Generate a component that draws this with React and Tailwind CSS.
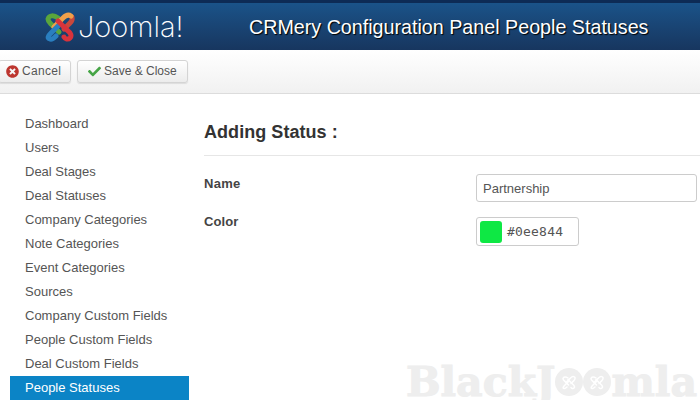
import React from "react";
import { FaTimesCircle, FaCheck } from "react-icons/fa";

const items = ["Dashboard","Users","Deal Stages","Deal Statuses","Company Categories","Note Categories","Event Categories","Sources","Company Custom Fields","People Custom Fields","Deal Custom Fields"];

function Mark({ size = 32, c = ["#5aa63c","#c9483c","#f0a04a","#2a7fc0","#d8333c"], w = 5 }) {
  return (
    <svg width={size} height={size * 30 / 32} viewBox="0 0 32 30" fill="none" strokeWidth={w} strokeLinecap="round" strokeLinejoin="round">
      <path d="M14 6C10 3 5 3 4 7C4 10 6 11 8 13L15 20" stroke={c[0]} />
      <path d="M28 5C29 9 27 10 25 12L20 17" stroke={c[1]} />
      <path d="M27 4C24 2 21 4 19 6L10 15" stroke={c[2]} />
      <path d="M15 13L7 21C4 24 3 26 6 27C8 28 10 26 12 24" stroke={c[3]} />
      <path d="M14 9L23 18C27 21 28 24 26 26C24 28 21 27 20 25" stroke={c[4]} />
    </svg>
  );
}

const grey = ["#fff","#fff","#fff","#fff","#fff"];

function Btn({ icon, label, className, textClass }) {
  return (
    <div className={"flex h-[23px] items-center rounded-[3px] border border-[#d4d4d4] bg-gradient-to-b from-white to-[#ececec] shadow-[0_1px_1px_#ddd] text-[12px] text-[#555] " + className}>
      {icon}
      <span className={"-mt-[1px] " + textClass}>{label}</span>
    </div>
  );
}

export default function App() {
  return (
    <div className="w-[700px] h-[400px] overflow-hidden bg-white flex flex-col font-['Liberation_Sans',Arial,sans-serif]">
      <header className="h-[50px] shrink-0 border-t-[3px] border-[#0d2b55] bg-gradient-to-b from-[#1a5389] to-[#17365f] flex items-center">
        <div className="ml-[44px] flex items-center">
          <Mark />
          <span className="ml-[2px] font-['Inter',sans-serif] font-extralight text-[29px] leading-none text-white w-[125px]">Joomla!</span>
        </div>
        <h1 className="ml-[46px] mt-[2px] text-[19.7px] text-white whitespace-nowrap [text-shadow:1px_1px_1px_#000]">CRMery Configuration Panel People Statuses</h1>
      </header>
      <div className="h-[44px] shrink-0 border-b border-[#dcdcdc] bg-gradient-to-b from-white to-[#f1f1f1] flex items-center gap-[6px]">
        <Btn className="-ml-[2px] w-[73px] pl-[7px] gap-[3px]" textClass="tracking-[0.3px]" icon={<FaTimesCircle className="text-[#bd362f] text-[13px]" />} label="Cancel" />
        <Btn className="w-[111px] pl-[10px] gap-[3px]" textClass="" icon={<FaCheck className="text-[#46a546] text-[13px]" />} label="Save & Close" />
      </div>
      <div className="flex flex-1 min-h-0">
        <nav className="ml-[10px] w-[179px] shrink-0 pt-[18px] text-[13px] text-[#555]">
          {items.map((t) => (
            <div key={t} className="h-[24px] pl-[15px] flex items-center">{t}</div>
          ))}
          <div className="h-[24px] pl-[15px] flex items-center bg-[#0b84c6] text-white">People Statuses</div>
        </nav>
        <main className="relative flex-1 pl-[15px]">
          <h2 className="h-[62px] pt-[16px] border-b border-[#e6e6e6] flex items-center text-[18px] font-bold text-[#333] tracking-[0.05px]">Adding Status :</h2>
          <div className="mt-[18px] flex h-[28px]">
            <label className="w-[272px] text-[13px] font-bold text-[#444] tracking-[0.3px] leading-[20px]">Name</label>
            <div className="w-[221px] h-[28px] rounded-[3px] border border-[#ccc] pl-[6px] pt-[1px] flex items-center text-[13px] text-[#555]">Partnership</div>
          </div>
          <div className="mt-[15px] flex">
            <label className="w-[272px] text-[13px] font-bold text-[#444] tracking-[0.1px] leading-[20px] -mt-[5px]">Color</label>
            <div className="w-[103px] h-[29px] rounded-[3px] border border-[#ccc] flex items-center pl-[3px] gap-[5px]">
              <div className="w-[22px] h-[22px] rounded-[3px] bg-[#0ee844]" />
              <span className="font-['DejaVu_Sans_Mono',monospace] text-[13px] tracking-[0.2px] text-[#555]">#0ee844</span>
            </div>
          </div>
          <div className="absolute right-[3px] bottom-0 h-[36px] flex items-center font-['DejaVu_Serif',serif] font-bold text-[41px] leading-[36px] text-[#eeeeee] [-webkit-text-stroke:1px_#eeeeee]">
            <span>BlackJ</span>
            <span className="w-[28px] h-[28px] rounded-full bg-[#eeeeee] flex items-center justify-center"><Mark size={16} w={3} c={grey} /></span>
            <span className="w-[28px] h-[28px] rounded-full bg-[#eeeeee] flex items-center justify-center"><Mark size={16} w={3} c={grey} /></span>
            <span>mla</span>
          </div>
        </main>
      </div>
    </div>
  );
}
